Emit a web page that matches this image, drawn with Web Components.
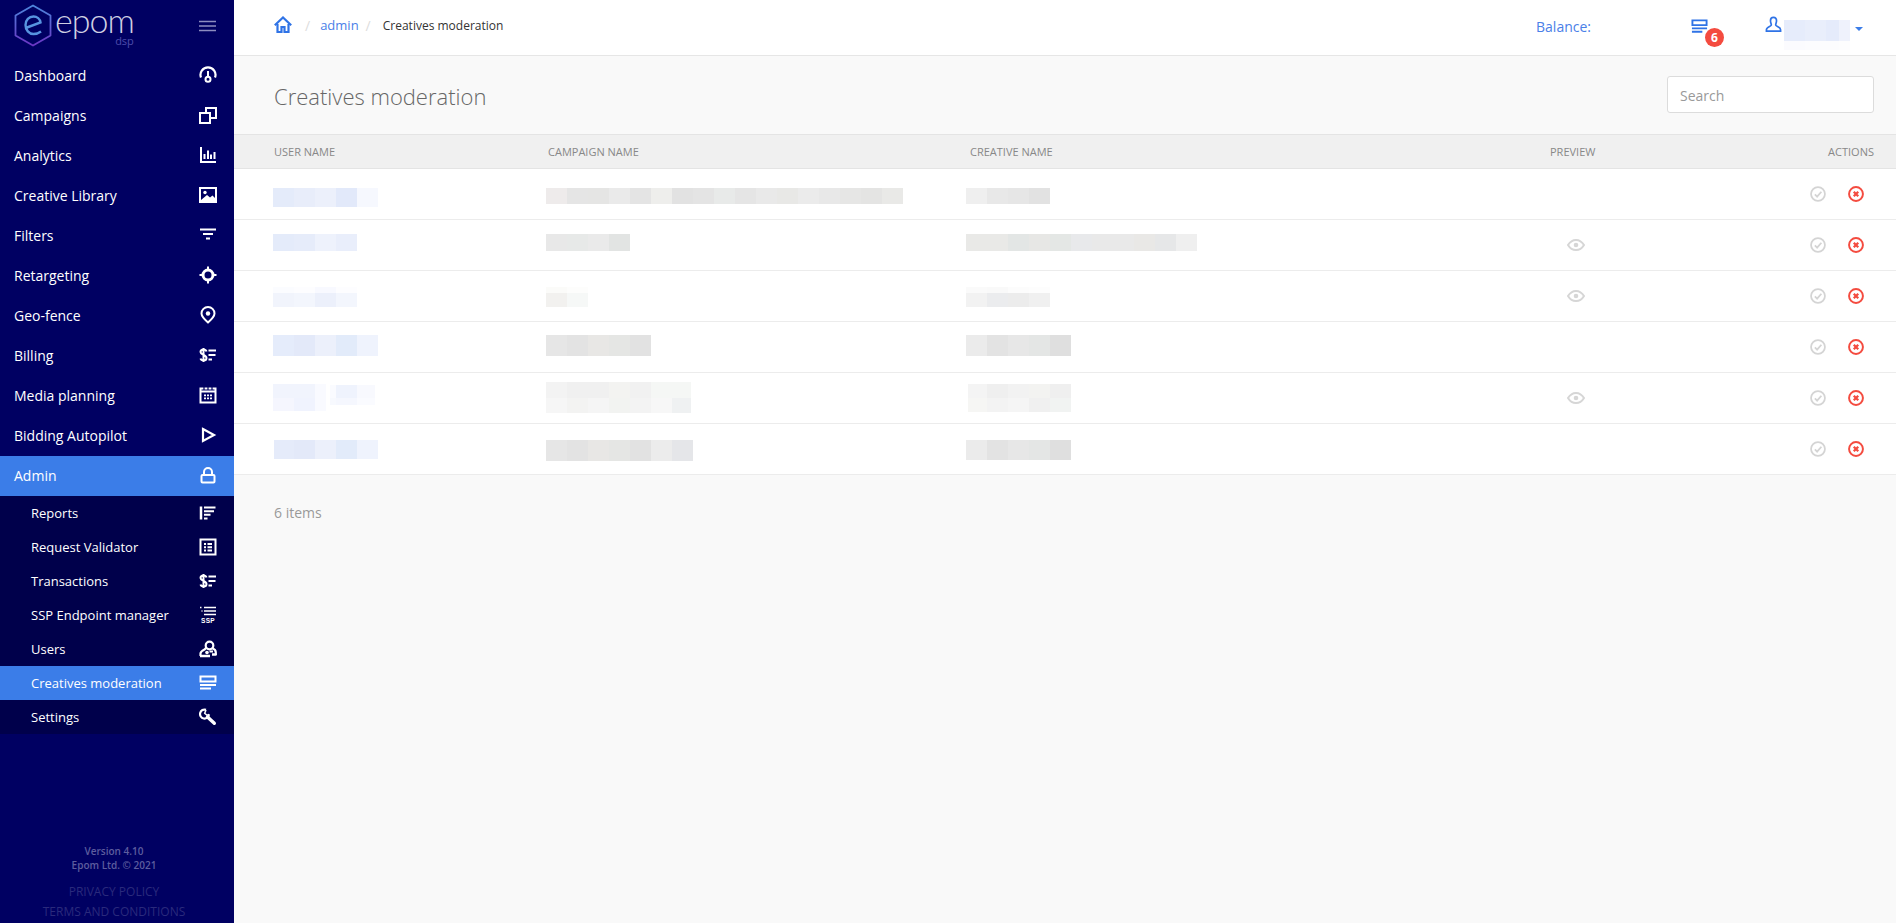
<!DOCTYPE html>
<html lang="en">
<head>
<meta charset="utf-8">
<title>Creatives moderation</title>
<style>
    html, body { margin: 0; height: 100%; overflow: hidden; }
    body { font-family: "Open Sans", "Liberation Sans", sans-serif; background: #f9f9f9; }
</style>
</head>
<body>
<app-shell>
    <side-nav slot="nav">
        <nav-item label="Dashboard" icon="dashboard"></nav-item>
        <nav-item label="Campaigns" icon="campaigns"></nav-item>
        <nav-item label="Analytics" icon="analytics"></nav-item>
        <nav-item label="Creative Library" icon="library"></nav-item>
        <nav-item label="Filters" icon="filters"></nav-item>
        <nav-item label="Retargeting" icon="target"></nav-item>
        <nav-item label="Geo-fence" icon="pin"></nav-item>
        <nav-item label="Billing" icon="billing"></nav-item>
        <nav-item label="Media planning" icon="calendar"></nav-item>
        <nav-item label="Bidding Autopilot" icon="play"></nav-item>
        <nav-item label="Admin" icon="lock" active></nav-item>
        <nav-group>
            <nav-item sub label="Reports" icon="reports"></nav-item>
            <nav-item sub label="Request Validator" icon="validator"></nav-item>
            <nav-item sub label="Transactions" icon="billing"></nav-item>
            <nav-item sub label="SSP Endpoint manager" icon="ssp"></nav-item>
            <nav-item sub label="Users" icon="users"></nav-item>
            <nav-item sub label="Creatives moderation" icon="moderation" active></nav-item>
            <nav-item sub label="Settings" icon="wrench"></nav-item>
        </nav-group>
    </side-nav>
    <top-bar slot="top"></top-bar>
    <page-head title-text="Creatives moderation"></page-head>
    <mod-table>
        <mod-row preview="0">
            <blur-block slot="user" top="19" rows="19:e4ebfa,e8edfa,ecf0fb,e2e9fa,f6f8fe"></blur-block>
            <blur-block slot="campaign" top="19" rows="16:eeebeb,e5e5e5,e5e5e4,eaeaea,e4e4e4,eeeeec,e2e2e2,e4e4e4,e8eae9,e5e5e5,e9e9e9,e8e8e6,ebebeb,e8e8e8,e6e6e5,e4e4e3,e9e9e7"></blur-block>
            <blur-block slot="creative" top="19" rows="16:efefef,e8e8e8,e6e6e6,e2e2e2"></blur-block>
        </mod-row>
        <mod-row preview="1">
            <blur-block slot="user" top="14" rows="17:e4ebfa,e6ecfa,eef2fc,e9eefb"></blur-block>
            <blur-block slot="campaign" top="14" rows="17:e8e8e8,e7e9e8,eaeaea,e2e4e3"></blur-block>
            <blur-block slot="creative" top="14" rows="17:e9e9e7,e9e9e7,e3e6e5,e7e7e5,e4e7e5,e8e9eb,e9e9e9,e9e9e9,e9e8e6,e6e7e8,efefef"></blur-block>
        </mod-row>
        <mod-row preview="1">
            <blur-block slot="user" top="16" rows="6:fbfcff,fdfdff,f8f9ff,fdfdff|14:f1f4fc,f3f6fd,ecf0fb,f3f6fd"></blur-block>
            <blur-block slot="campaign" top="16" rows="6:fbfbf9,fdfdfc|14:f2f1ef,f6f8f7"></blur-block>
            <blur-block slot="creative" top="16" rows="6:fafafa,f9f9f9,fcfcfc,fdfdfd|14:f2f2f2,ebecee,ececec,f0f0f0"></blur-block>
        </mod-row>
        <mod-row preview="0">
            <blur-block slot="user" top="13" rows="21:e5ecfb,e3e9f9,ecf0fb,e2ebfa,eff3fd"></blur-block>
            <blur-block slot="campaign" top="13" rows="21:e6e6e6,e3e3e3,e8e7e5,e5e6e4,e2e2e2"></blur-block>
            <blur-block slot="creative" top="13" rows="21:ebebeb,e3e3e3,e7e7e7,e4e6e5,dfdfdf"></blur-block>
        </mod-row>
        <mod-row preview="1">
            <blur-block slot="user" top="11" rows="14:f1f4fd,f1f4fd,f9faff/11|13:f5f6fe,f0f3fe,f9faff/11"></blur-block>
            <blur-block slot="user" top="12" left="4" rows="13:fafbff/6,eff3fd,f8f9fe/18|7:f7f9fe/6,f5f7fe,fafbff/18"></blur-block>
            <blur-block slot="campaign" top="9" rows="16:f3f3f3,f0f0f0,f0f0f0,f3f3f1,f1f1f1,f5f7f5,f5f7f5/19|15:f6f6f6,f3f3f2,f5f5f5,f2f3f1,f3f3f3,f7f7f7,eff1f2/19"></blur-block>
            <blur-block slot="creative" top="11" left="2" rows="14:f4f4f4/19,efefef,f2f2f2,f3f3f1,efefef|14:f6f6f4/19,f3f3f3,f5f5f5,f0f0f0,f1f3f2"></blur-block>
        </mod-row>
        <mod-row preview="0">
            <blur-block slot="user" top="16" left="1" rows="19:e5ebfa/20,e3e9f9,ecf0fb,e2ebfa,eff3fd"></blur-block>
            <blur-block slot="campaign" top="16" rows="21:e6e6e6,e3e3e3,e8e7e5,e5e6e4,e2e2e2,ececec,e5e6e9"></blur-block>
            <blur-block slot="creative" top="16" rows="20:ebebeb,e3e3e3,e7e7e7,e4e6e5,dfdfdf"></blur-block>
        </mod-row>
        <span slot="footer">6 items</span>
    </mod-table>
</app-shell>

<script>
const ICONS = {
    dashboard: '<path d="M2 11.500A7.500 7.500 0 1 1 16 11.500" fill="none" stroke="currentColor" stroke-width="2.200"/><path d="M9 5V10.500" stroke="currentColor" stroke-width="2"/><circle cx="9" cy="13.300" r="2.500" fill="none" stroke="currentColor" stroke-width="2"/>',
    campaigns: '<path d="M1 7H11V17H1ZM7 7V2H17V12H11" fill="none" stroke="currentColor" stroke-width="2"/>',
    analytics: '<path d="M2 1V16H17" fill="none" stroke="currentColor" stroke-width="2"/><path d="M5.500 13V8M9 13V4.500M12 13V8.500M15.500 13V6" stroke="currentColor" stroke-width="2"/>',
    library: '<path d="M1 2H17V16H1Z" fill="none" stroke="currentColor" stroke-width="2"/><circle cx="6" cy="6.500" r="1.700" fill="currentColor"/><path d="M2 14L8 9L11 11.500L13.500 9.500L16 12V15H2Z" fill="currentColor"/>',
    filters: '<path d="M1 3.500H17M4 8H14M7 12.500H11" stroke="currentColor" stroke-width="2"/>',
    target: '<circle cx="9" cy="9" r="5" fill="none" stroke="currentColor" stroke-width="3"/><path d="M9 .5V4.500M9 13.500V17.500M.5 9H4.500M13.500 9H17.500" stroke="currentColor" stroke-width="2"/>',
    pin: '<path d="M9 16.500C5 13 2.500 10.500 2.500 7.500A6.500 6.500 0 0 1 15.500 7.500C15.500 10.500 13 13 9 16.500Z" fill="none" stroke="currentColor" stroke-width="2"/><circle cx="9" cy="7.500" r="2.200" fill="currentColor"/>',
    billing: '<path d="M7.500 5.500C7 4 6 3.500 4.500 3.500C2.500 3.500 1.500 4.500 1.500 6C1.500 9 7.500 8.500 7.500 12C7.500 13.500 6.500 14.500 4.500 14.500C3 14.500 2 14 1.500 12.500M4.500 2V16" fill="none" stroke="currentColor" stroke-width="2"/><path d="M9.500 4.500H17M9.500 9H16.500M9.500 13.500H13" stroke="currentColor" stroke-width="2"/>',
    calendar: '<path d="M1.500 2.500H16.500V16.500H1.500Z" fill="none" stroke="currentColor" stroke-width="2"/><path d="M1.500 5.500H16.500" stroke="currentColor" stroke-width="2"/><path d="M5 1V4M9 1V4M13 1V4" stroke="#000062" stroke-width="1.200"/><path d="M5 8.500H7V10.200H5ZM8 8.500H10V10.200H8ZM11 8.500H13V10.200H11ZM5 11.500H7V13.200H5ZM8 11.500H10V13.200H8ZM11 11.500H13V13.200H11Z" fill="currentColor"/>',
    play: '<path d="M4 3L15 9L4 15Z" fill="none" stroke="currentColor" stroke-width="2.200"/>',
    lock: '<path d="M5 9V6A4 4 0 0 1 13 6V9" fill="none" stroke="currentColor" stroke-width="2"/><rect x="2.500" y="9" width="13" height="7.500" rx="1" fill="none" stroke="currentColor" stroke-width="2"/>',
    reports: '<path d="M2 2.500V15.500" stroke="currentColor" stroke-width="2.500"/><path d="M5 3.500H16.500M5 7.300H15M5 10.800H11.500M5 14.500H8.500" stroke="currentColor" stroke-width="2"/>',
    validator: '<path d="M1.500 1.500H16.500V16.500H1.500Z" fill="none" stroke="currentColor" stroke-width="2"/><path d="M5 5H7V7H5ZM8.500 5H13V7H8.500ZM5 8.200H7V10.200H5ZM8.500 8.200H13V10.200H8.500ZM5 11.400H7V13.400H5ZM8.500 11.400H13V13.400H8.500Z" fill="currentColor"/>',
    ssp: '<path d="M1 1.500H2.500M5 1.500H17M5 5H17M5 8.500H17M2.500 5H3.500" stroke="currentColor" stroke-width="1.700"/><text x="9" y="16.500" text-anchor="middle" font-family="Liberation Sans, sans-serif" font-size="6.500" font-weight="700" fill="currentColor" letter-spacing=".3">SSP</text>',
    users: '<circle cx="10.500" cy="5.500" r="3.800" fill="none" stroke="currentColor" stroke-width="2.200"/><path d="M1.500 16V13.500C1.500 11.500 3.500 10.500 5.500 9.500L7.500 7.500M13.500 8.500C15.500 9 16.800 10.500 16.800 12.500V15" fill="none" stroke="currentColor" stroke-width="2.200"/><path d="M1 16H11M13 14.500H17.500" stroke="currentColor" stroke-width="2.400"/><circle cx="8" cy="12.500" r="1.800" fill="currentColor"/><path d="M10.500 11.500H14" stroke="currentColor" stroke-width="2"/>',
    moderation: '<path d="M1.500 2.500H16.500V7.500H1.500Z" fill="none" stroke="currentColor" stroke-width="2"/><path d="M1 11H17M1 14.500H12" stroke="currentColor" stroke-width="2"/>',
    wrench: '<path d="M7 1.800A4.500 4.500 0 1 0 10 6.500" fill="none" stroke="currentColor" stroke-width="2.200"/><path d="M7 2L5.700 5.200L8 7.200L10.200 6.400" fill="none" stroke="currentColor" stroke-width="1.500"/><path d="M8.500 9L15.300 15.300" stroke="currentColor" stroke-width="3.400" stroke-linecap="round"/>',
    home: '<path d="M.8 9.200L9 1.500L17.200 9.200" fill="none" stroke="currentColor" stroke-width="2.200"/><path d="M3.500 8V16H7.500V11H10.500V16H14.500V8" fill="none" stroke="currentColor" stroke-width="2.200"/>',
    person: '<path d="M9 1.500C6.800 1.500 5.800 3 5.800 5C5.800 7 6.700 8 6.700 9.500C6.700 11 1.500 11.500 1.500 14.500V16H16.500V14.500C16.500 11.500 11.300 11 11.300 9.500C11.300 8 12.200 7 12.200 5C12.200 3 11.200 1.500 9 1.500Z" fill="none" stroke="currentColor" stroke-width="1.800"/>',
    eye: '<path d="M1 9C3 5.700 5.800 3.900 9 3.900C12.200 3.900 15 5.700 17 9C15 12.300 12.200 14.100 9 14.100C5.800 14.100 3 12.300 1 9Z" fill="none" stroke="currentColor" stroke-width="2"/><circle cx="9" cy="9" r="2.300" fill="currentColor"/>',
    check: '<circle cx="9" cy="9" r="7.800" fill="none" stroke="currentColor" stroke-width="2"/><path d="M5.500 9.500L8 12L12.800 6.500" fill="none" stroke="currentColor" stroke-width="2"/>',
    cross: '<circle cx="9" cy="9" r="7.800" fill="none" stroke="currentColor" stroke-width="2.200"/><path d="M6.500 6.500L11.500 11.500M11.500 6.500L6.500 11.500" stroke="currentColor" stroke-width="2.600"/>'
};

class UiIcon extends HTMLElement {
    constructor() {
        super();
        this.attachShadow({ mode: 'open' });
    }

    connectedCallback() {
        const size = this.getAttribute('size') || 18;
        this.shadowRoot.innerHTML = `
            <style>
                :host { display: inline-flex; flex: none; line-height: 0; }
            </style>
            <svg width="${size}" height="${size}" viewBox="0 0 18 18">${ICONS[this.getAttribute('name')] || ''}</svg>
        `;
    }
}
customElements.define('ui-icon', UiIcon);

class AppShell extends HTMLElement {
    constructor() {
        super();
        this.attachShadow({ mode: 'open' });
        this.shadowRoot.innerHTML = `
            <style>
                :host { display: grid; grid-template-columns: 234px 1fr; height: 923px; overflow: hidden; }
                .main { display: flex; flex-direction: column; min-width: 0; }
            </style>
            <slot name="nav"></slot>
            <div class="main">
                <slot name="top"></slot>
                <slot></slot>
            </div>
        `;
    }
}
customElements.define('app-shell', AppShell);

class SideNav extends HTMLElement {
    constructor() {
        super();
        this.attachShadow({ mode: 'open' });
        this.shadowRoot.innerHTML = `
            <style>
                :host { display: flex; flex-direction: column; background: #000062; color: #fff; height: 923px; }
                .brand { display: flex; align-items: flex-start; justify-content: space-between; height: 56px; padding: 4px 17px 0 14px; box-sizing: border-box; }
                .logo { display: flex; gap: 3px; }
                .word { display: flex; flex-direction: column; align-items: flex-end; }
                .epom { font: 300 34px/30px Lato, "Open Sans", sans-serif; color: #cfcfe2; letter-spacing: -1px; margin-top: 1px; }
                .dsp { font: 11px/11px "Open Sans", sans-serif; color: #4d4dab; }
                .burger { margin-top: 16px; margin-right: 1px; }
                .foot { margin-top: auto; text-align: center; padding: 0 6px 1px 0; }
                .ver { font-size: 10px; line-height: 14px; color: #5d5d9e; font-weight: 600; }
                .links { margin-top: 10px; font-size: 12px; line-height: 20px; color: #2a2a7c; }
            </style>
            <div class="brand">
                <div class="logo">
                    <svg width="38" height="43" viewBox="0 0 38 43">
                        <defs>
                            <linearGradient id="hex" x1="0" y1="0" x2="0" y2="1">
                                <stop offset="0" stop-color="#4d86dc"/>
                                <stop offset="1" stop-color="#6c35c4"/>
                            </linearGradient>
                        </defs>
                        <path d="M19 1.500L36.500 11.500V31.500L19 41.500L1.500 31.500V11.500Z" fill="none" stroke="url(#hex)" stroke-width="1.800" stroke-linejoin="round"/>
                        <path d="M13 23.500L26.500 18.500C26 15 23 12.500 19.500 12.500C15 12.500 11.500 16 11.500 21C11.500 26 15 30 19.500 30C22.500 30 25 29 27 27.500" fill="none" stroke="#5794e0" stroke-width="2.400"/>
                    </svg>
                    <div class="word">
                        <span class="epom">epom</span>
                        <span class="dsp">dsp</span>
                    </div>
                </div>
                <svg class="burger" width="17" height="12" viewBox="0 0 17 12">
                    <path d="M0 1.500H17M0 6H17M0 10.500H17" stroke="#8d8dc0" stroke-width="1.500"/>
                </svg>
            </div>
            <slot></slot>
            <div class="foot">
                <div class="ver">Version 4.10<br>Epom Ltd. © 2021</div>
                <div class="links">PRIVACY POLICY<br>TERMS AND CONDITIONS</div>
            </div>
        `;
    }
}
customElements.define('side-nav', SideNav);

class NavItem extends HTMLElement {
    constructor() {
        super();
        this.attachShadow({ mode: 'open' });
    }

    connectedCallback() {
        this.shadowRoot.innerHTML = `
            <style>
                :host { display: flex; align-items: center; justify-content: space-between; height: 40px; box-sizing: border-box; padding: 0 17px 2px 14px; font-size: 14px; color: #fff; }
                :host([sub]) { height: 34px; padding: 0 17px 0 31px; font-size: 13px; }
                :host([active]) { background: #3b7de8; }
            </style>
            <span>${this.getAttribute('label')}</span>
            <ui-icon name="${this.getAttribute('icon')}"></ui-icon>
        `;
    }
}
customElements.define('nav-item', NavItem);

class NavGroup extends HTMLElement {
    constructor() {
        super();
        this.attachShadow({ mode: 'open' });
        this.shadowRoot.innerHTML = `
            <style>
                :host { display: block; background: #00004b; }
            </style>
            <slot></slot>
        `;
    }
}
customElements.define('nav-group', NavGroup);

class TopBar extends HTMLElement {
    constructor() {
        super();
        this.attachShadow({ mode: 'open' });
        this.shadowRoot.innerHTML = `
            <style>
                :host { display: flex; align-items: flex-start; height: 56px; box-sizing: border-box; background: #fff; border-bottom: 1px solid #e6e6e6; padding: 15px 33px 0 40px; font-size: 12px; color: #444; }
                .crumbs { display: flex; align-items: center; height: 20px; color: #333; }
                .home { color: #2f73e6; margin-right: 13px; }
                .sep { color: #ddd; margin-right: 12px; font-size: 14px; }
                .sep.first { margin-right: 10px; }
                .admin { color: #4a80e8; font-size: 13px; margin-right: 7px; }
                .balance { margin-left: auto; font-size: 14px; line-height: 24px; color: #4a80e8; margin-right: 100px; }
                .queue { position: relative; color: #2f73e6; margin-right: 57px; margin-top: 3px; height: 18px; }
                .badge { position: absolute; left: 14px; top: 10px; width: 19px; height: 19px; border-radius: 50%; background: #f44b3f; color: #fff; font-size: 12px; font-weight: 700; line-height: 19px; text-align: center; }
                .person { color: #2f73e6; margin-top: 1px; }
                .name { margin-left: 2px; margin-top: 5px; }
                .caret { width: 0; height: 0; border: 4px solid transparent; border-top: 4px solid #3b7de8; border-bottom: 0; margin: 12px 0 0 5px; }
            </style>
            <div class="crumbs">
                <ui-icon class="home" name="home" size="18"></ui-icon>
                <span class="sep first">/</span>
                <span class="admin">admin</span>
                <span class="sep">/</span>
                <span>Creatives moderation</span>
            </div>
            <span class="balance">Balance:</span>
            <div class="queue">
                <ui-icon name="moderation" size="17"></ui-icon>
                <span class="badge">6</span>
            </div>
            <ui-icon class="person" name="person" size="17"></ui-icon>
            <blur-block class="name" rows="21:e6ecfb,e9eefb,e5ebfb/13,eff2fc/11|9:fbfbfe,fcfcfe,fcfcfe/13,fdfdfe/11"></blur-block>
            <span class="caret"></span>
        `;
    }
}
customElements.define('top-bar', TopBar);

class PageHead extends HTMLElement {
    constructor() {
        super();
        this.attachShadow({ mode: 'open' });
    }

    connectedCallback() {
        this.shadowRoot.innerHTML = `
            <style>
                :host { display: flex; align-items: center; justify-content: space-between; height: 78px; padding: 0 22px 0 40px; box-sizing: border-box; }
                h1 { margin: 0; padding-top: 2px; font-size: 22px; font-weight: 300; color: #666; }
                input { width: 207px; height: 37px; box-sizing: border-box; border: 1px solid #dcdcdc; border-radius: 3px; padding: 2px 12px 0; font: 14px "Open Sans", sans-serif; background: #fff; margin-top: -1px; }
                input::placeholder { color: #999; opacity: 1; }
            </style>
            <h1>${this.getAttribute('title-text')}</h1>
            <input type="text" placeholder="Search">
        `;
    }
}
customElements.define('page-head', PageHead);

class ModTable extends HTMLElement {
    constructor() {
        super();
        this.attachShadow({ mode: 'open' });
        this.shadowRoot.innerHTML = `
            <style>
                :host { display: block; }
                .head { display: grid; grid-template-columns: 274px 422px 580px 1fr auto; align-items: center; height: 35px; box-sizing: border-box; padding: 0 22px 0 40px; background: #f0f0f0; border-top: 1px solid #e4e4e4; border-bottom: 1px solid #e4e4e4; font-size: 11px; color: #888; text-transform: uppercase; }
                .foot { padding: 28px 40px; font-size: 14px; line-height: 20px; color: #999; }
            </style>
            <div class="head">
                <span>User name</span>
                <span>Campaign name</span>
                <span>Creative name</span>
                <span>Preview</span>
                <span>Actions</span>
            </div>
            <slot></slot>
            <div class="foot"><slot name="footer"></slot></div>
        `;
    }
}
customElements.define('mod-table', ModTable);

class ModRow extends HTMLElement {
    constructor() {
        super();
        this.attachShadow({ mode: 'open' });
    }

    connectedCallback() {
        const eye = this.getAttribute('preview') === '1' ? '<ui-icon class="eye" name="eye" size="18"></ui-icon>' : '';
        this.shadowRoot.innerHTML = `
            <style>
                :host { display: grid; grid-template-columns: 273px 420px 584px 1fr auto; height: 51px; box-sizing: border-box; padding: 0 32px 0 39px; background: #fff; border-bottom: 1px solid #ececec; }
                .cell { display: flex; align-items: flex-start; }
                .mid { align-items: center; }
                .eye { color: #d6d6d6; margin-left: 17px; }
                .acts { display: flex; align-items: center; gap: 22px; }
                .ok { color: #d4d4d4; }
                .no { color: #f44b3f; }
            </style>
            <div class="cell"><slot name="user"></slot></div>
            <div class="cell"><slot name="campaign"></slot></div>
            <div class="cell"><slot name="creative"></slot></div>
            <div class="cell mid">${eye}</div>
            <div class="acts">
                <ui-icon class="ok" name="check" size="16"></ui-icon>
                <ui-icon class="no" name="cross" size="16"></ui-icon>
            </div>
        `;
    }
}
customElements.define('mod-row', ModRow);

// pixelated block standing in for a censored value
// rows format: "height:color,color/width|height:color,..."
class BlurBlock extends HTMLElement {
    constructor() {
        super();
        this.attachShadow({ mode: 'open' });
    }

    connectedCallback() {
        const rows = this.getAttribute('rows').split('|').map(row => {
            const [h, cells] = row.split(':');
            const html = cells.split(',').map(cell => {
                const [color, w] = cell.split('/');
                return `<i style="width:${w || 21}px;background:#${color}"></i>`;
            }).join('');
            return `<div style="height:${h}px">${html}</div>`;
        }).join('');
        const top = this.getAttribute('top');
        const left = this.getAttribute('left');
        this.shadowRoot.innerHTML = `
            <style>
                :host { display: block; flex: none; }
                div { display: flex; }
                i { display: block; }
            </style>
            ${rows}
        `;
        if (top) this.style.marginTop = top + 'px';
        if (left) this.style.marginLeft = left + 'px';
    }
}
customElements.define('blur-block', BlurBlock);
</script>
</body>
</html>
